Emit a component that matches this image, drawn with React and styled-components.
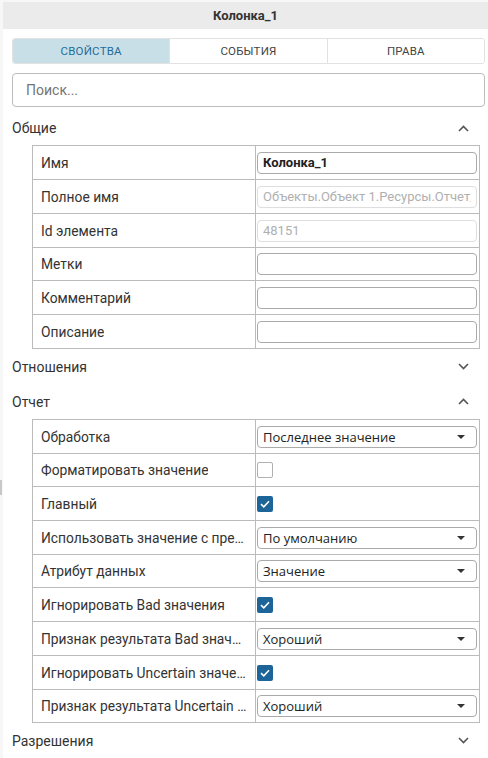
import React, { useState } from "react";
import styled, { createGlobalStyle } from "styled-components";

const GlobalStyle = createGlobalStyle`
  html, body {
    margin: 0;
    padding: 0;
    background: #fff;
  }
  body {
    font-family: Roboto, "Liberation Sans", sans-serif;
    color: #333;
  }
  * {
    box-sizing: border-box;
  }
`;

const Page = styled.div`
  display: flex;
  width: 488px;
  height: 758px;
  overflow: hidden;
  background: #f7f7f7;
  position: relative;
`;

const Grip = styled.div`
  position: absolute;
  left: 0;
  top: 480px;
  width: 2px;
  height: 15px;
  background: #c8c8c8;
`;

const Panel = styled.div`
  flex: 1;
  margin: 2px 0 0 3px;
  background: #fff;
  display: flex;
  flex-direction: column;
`;

const Title = styled.div`
  height: 27px;
  background: #ebebeb;
  display: flex;
  align-items: center;
  justify-content: center;
  font-size: 13px;
  font-weight: 700;
  color: #333;
`;

const Tabs = styled.div`
  display: flex;
  margin: 9px 3px 0 9px;
  height: 26px;
  border: 1px solid #e2e2e2;
  border-radius: 3px;
  overflow: hidden;
`;

const Tab = styled.div`
  flex: 1;
  display: flex;
  align-items: center;
  justify-content: center;
  font-size: 11.5px;
  letter-spacing: 0.2px;
  color: ${(p) => (p.$active ? "#1f6d9c" : "#444")};
  background: ${(p) => (p.$active ? "#c9dfe8" : "#fff")};
  & + & {
    border-left: 1px solid #e2e2e2;
  }
`;

const Search = styled.input`
  margin: 9px 3px 0 9px;
  height: 34px;
  border: 1px solid #bcbcbc;
  border-radius: 4px;
  padding: 0 13px;
  font-family: Roboto, "Liberation Sans", sans-serif;
  font-size: 14px;
  color: #333;
  outline: none;
  &::placeholder {
    color: #757575;
  }
`;

const Spacer = styled.div`
  height: 4px;
`;

const SectionHead = styled.div`
  height: 35px;
  display: flex;
  align-items: center;
  justify-content: space-between;
  padding: 0 19px 0 9px;
  font-size: 14px;
  color: #333;
`;

const Table = styled.div`
  margin: 0 8px 0 29px;
  border: 1px solid #bbb;
  border-bottom: none;
`;

const Row = styled.div`
  display: grid;
  grid-template-columns: 223px 1fr;
  height: ${(p) => p.$h}px;
  border-bottom: 1px solid #bbb;
`;

const Label = styled.div`
  display: flex;
  align-items: center;
  padding: 0 8px 0 8px;
  font-size: 13.8px;
  color: #333;
  border-right: 1px solid #bbb;
  min-width: 0;
  span {
    white-space: nowrap;
    overflow: hidden;
    text-overflow: ellipsis;
  }
`;

const Value = styled.div`
  display: flex;
  align-items: center;
  padding: 0 2px 0 1px;
  min-width: 0;
`;

const TextField = styled.input`
  width: 100%;
  height: 22px;
  border: 1px solid ${(p) => (p.disabled ? "#dedede" : "#aaa")};
  border-radius: 4px;
  background: #fff;
  padding: 0 5px;
  font-family: Roboto, "Liberation Sans", sans-serif;
  font-size: 13px;
  font-weight: ${(p) => (p.$bold ? 700 : 400)};
  color: ${(p) => (p.disabled ? "#b0b0b0" : "#222")};
  outline: none;
`;

const SelectBox = styled.div`
  width: 100%;
  height: 22px;
  border: 1px solid #aaa;
  border-radius: 4px;
  display: flex;
  align-items: center;
  justify-content: space-between;
  padding: 0 11px 0 5px;
  font-family: "Open Sans", "Noto Sans", sans-serif;
  font-size: 13px;
  color: #222;
`;

const Caret = styled.span`
  width: 0;
  height: 0;
  border-left: 4px solid transparent;
  border-right: 4px solid transparent;
  border-top: 4px solid #333;
`;

const Box = styled.span`
  width: 16px;
  height: 16px;
  border-radius: 2px;
  display: flex;
  align-items: center;
  justify-content: center;
  background: ${(p) => (p.$on ? "#1d6498" : "#fff")};
  border: ${(p) => (p.$on ? "none" : "1.5px solid #b0b0b0")};
`;

const Chevron = ({ up }) => (
  <svg width="11" height="7" viewBox="0 0 11 7">
    <path
      d={up ? "M1 6 L5.5 1.5 L10 6" : "M1 1 L5.5 5.5 L10 1"}
      fill="none"
      stroke="#555"
      strokeWidth="1.6"
    />
  </svg>
);

const Checkbox = ({ on }) => (
  <Box $on={on}>
    {on && (
      <svg width="10" height="8" viewBox="0 0 10 8">
        <path d="M1 4.2 L3.8 6.8 L9 1.3" fill="none" stroke="#fff" strokeWidth="1.6" />
      </svg>
    )}
  </Box>
);

const Section = ({ title, open, children }) => (
  <>
    <SectionHead>
      {title}
      <Chevron up={open} />
    </SectionHead>
    {open && children}
  </>
);

const renderValue = (f) => {
  if (f.type === "check") return <Checkbox on={f.value} />;
  if (f.type === "select")
    return (
      <SelectBox>
        {f.value}
        <Caret />
      </SelectBox>
    );
  return (
    <TextField
      readOnly
      value={f.value || ""}
      disabled={f.disabled}
      $bold={f.bold}
    />
  );
};

const general = [
  { label: "Имя", value: "Колонка_1", bold: true, h: 34 },
  { label: "Полное имя", value: "Объекты.Объект 1.Ресурсы.Отчет_1.Колонка_1", disabled: true, h: 34 },
  { label: "Id элемента", value: "48151", disabled: true, h: 34 },
  { label: "Метки", h: 33 },
  { label: "Комментарий", h: 34 },
  { label: "Описание", h: 34 },
];

const report = [
  { label: "Обработка", type: "select", value: "Последнее значение", h: 34 },
  { label: "Форматировать значение", type: "check", value: false, h: 33 },
  { label: "Главный", type: "check", value: true, h: 34 },
  { label: "Использовать значение с предыдущего периода", type: "select", value: "По умолчанию", h: 34 },
  { label: "Атрибут данных", type: "select", value: "Значение", h: 33 },
  { label: "Игнорировать Bad значения", type: "check", value: true, h: 34 },
  { label: "Признак результата Bad значения", type: "select", value: "Хороший", h: 34 },
  { label: "Игнорировать Uncertain значения", type: "check", value: true, h: 34 },
  { label: "Признак результата Uncertain значения", type: "select", value: "Хороший", h: 33 },
];

const PropTable = ({ rows }) => (
  <Table>
    {rows.map((f) => (
      <Row key={f.label} $h={f.h}>
        <Label title={f.label}>
          <span>{f.label}</span>
        </Label>
        <Value>{renderValue(f)}</Value>
      </Row>
    ))}
  </Table>
);

export default function App() {
  const [tab, setTab] = useState(0);
  const tabs = ["СВОЙСТВА", "СОБЫТИЯ", "ПРАВА"];

  return (
    <>
      <GlobalStyle />
      <Page>
        <Grip />
        <Panel>
          <Title>Колонка_1</Title>
          <Tabs>
            {tabs.map((t, i) => (
              <Tab key={t} $active={tab === i} onClick={() => setTab(i)}>
                {t}
              </Tab>
            ))}
          </Tabs>
          <Search placeholder="Поиск..." />
          <Spacer />
          <Section title="Общие" open>
            <PropTable rows={general} />
          </Section>
          <Section title="Отношения" />
          <Section title="Отчет" open>
            <PropTable rows={report} />
          </Section>
          <Section title="Разрешения" />
        </Panel>
      </Page>
    </>
  );
}
